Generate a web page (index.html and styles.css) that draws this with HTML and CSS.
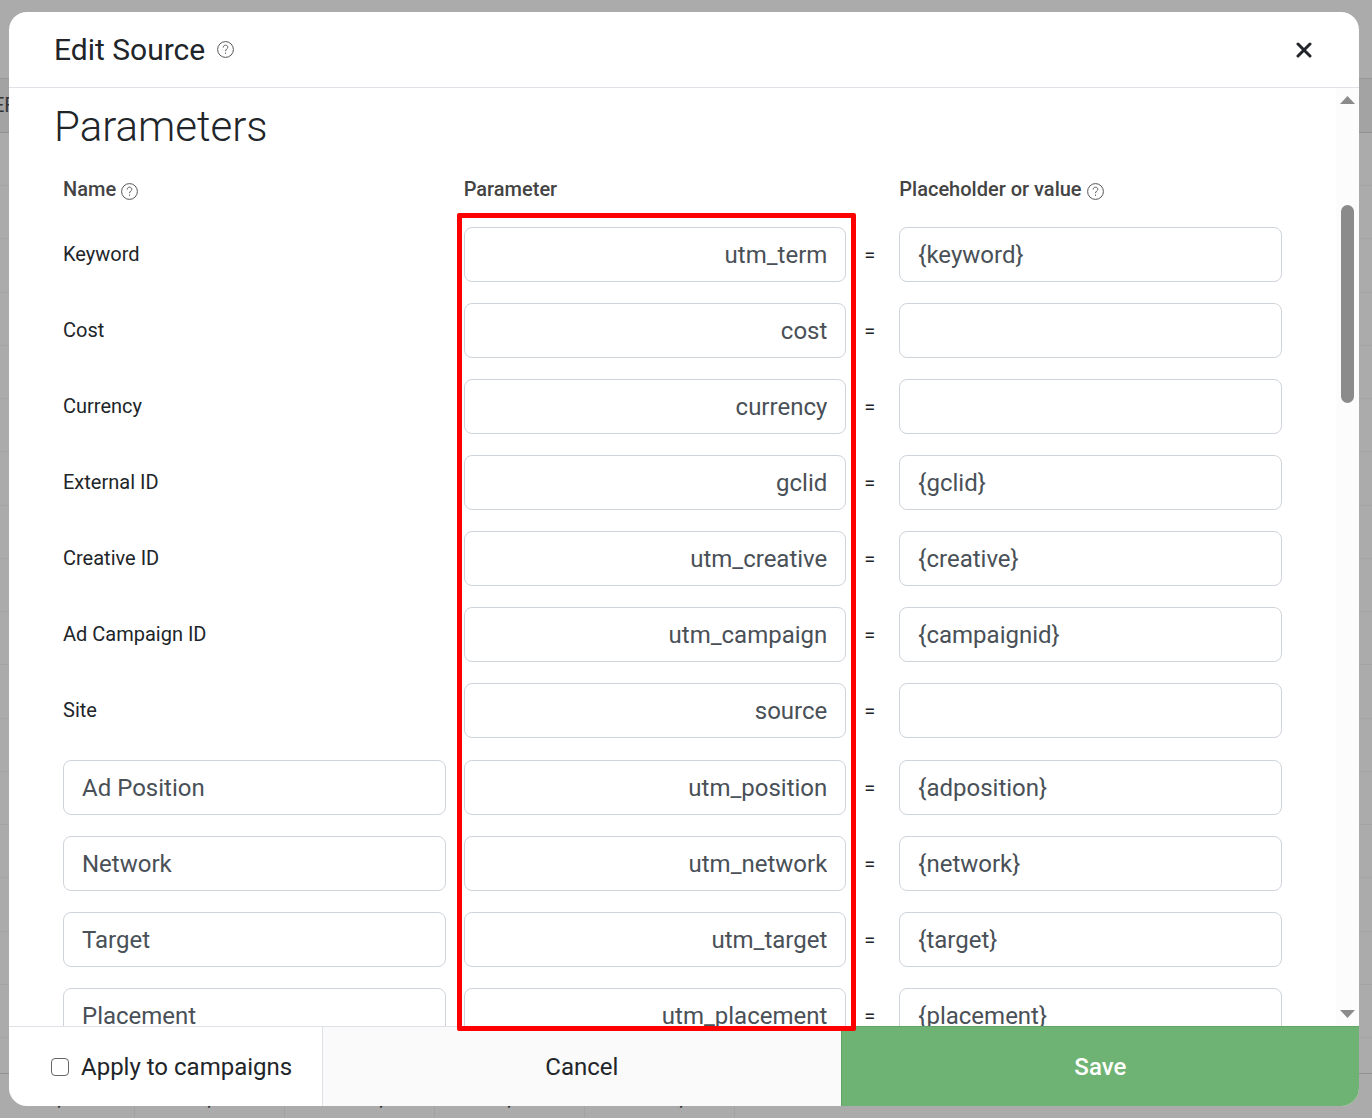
FILE: index.html
```html
<!DOCTYPE html>
<html lang="en">

<head>
    <meta charset="UTF-8">
    <meta name="viewport" content="width=device-width, initial-scale=1.0">
    <title>Edit Source</title>
    <link rel="stylesheet" href="styles.css">
</head>

<body>
    <!-- Report grid behind the dialog -->
    <div class="backdrop" aria-hidden="true">
        <div class="grid-toolbar"></div>
        <div class="grid-head">EF</div>
        <div class="grid-rows">
            <div></div><div></div><div></div><div></div><div></div><div></div>
            <div></div><div></div><div></div><div></div><div></div><div></div>
            <div></div><div></div><div></div><div></div><div></div>
        </div>
        <div class="grid-gap"></div>
        <div class="grid-total">
            <span>,</span><span>,</span><span class="wide">,</span><span>,</span><span class="wide">,</span>
        </div>
    </div>

    <div class="modal" role="dialog" aria-labelledby="modalTitle">
        <div class="modal-header">
            <h1 id="modalTitle">Edit Source</h1>
            <svg class="help" viewBox="0 0 17 17"><circle cx="8.5" cy="8.5" r="7.9" /><path d="M6.2 6.500C6.200 5.100 7.100 4.200 8.500 4.200s2.300.9 2.300 2.100c0 1.700-2.300 1.800-2.300 3.900M8.500 11.600v1.200" /></svg>
            <button type="button" class="close" aria-label="Close">
                <svg viewBox="0 0 16 16"><path d="M2 2l12 12M14 2L2 14" /></svg>
            </button>
        </div>

        <div class="modal-body">
            <div class="content">
                <h2>Parameters</h2>
                <table class="params">
                    <thead>
                        <tr>
                            <th>Name <svg class="help" viewBox="0 0 17 17"><circle cx="8.5" cy="8.5" r="7.9" /><path d="M6.2 6.500C6.200 5.100 7.100 4.200 8.500 4.200s2.300.9 2.300 2.100c0 1.700-2.300 1.800-2.300 3.900M8.500 11.600v1.200" /></svg></th>
                            <th>Parameter</th>
                            <th class="eq"></th>
                            <th>Placeholder or value <svg class="help" viewBox="0 0 17 17"><circle cx="8.5" cy="8.5" r="7.9" /><path d="M6.2 6.500C6.200 5.100 7.100 4.200 8.500 4.200s2.300.9 2.300 2.100c0 1.700-2.300 1.800-2.300 3.900M8.500 11.600v1.200" /></svg></th>
                        </tr>
                    </thead>
                    <tbody>
                        <tr>
                            <td><label for="keyword">Keyword</label></td>
                            <td><input type="text" class="param" id="keyword" value="utm_term"></td>
                            <td class="eq">=</td>
                            <td><input type="text" aria-label="Keyword value" value="{keyword}"></td>
                        </tr>
                        <tr>
                            <td><label for="cost">Cost</label></td>
                            <td><input type="text" class="param" id="cost" value="cost"></td>
                            <td class="eq">=</td>
                            <td><input type="text" aria-label="Cost value"></td>
                        </tr>
                        <tr>
                            <td><label for="currency">Currency</label></td>
                            <td><input type="text" class="param" id="currency" value="currency"></td>
                            <td class="eq">=</td>
                            <td><input type="text" aria-label="Currency value"></td>
                        </tr>
                        <tr>
                            <td><label for="externalId">External ID</label></td>
                            <td><input type="text" class="param" id="externalId" value="gclid"></td>
                            <td class="eq">=</td>
                            <td><input type="text" aria-label="External ID value" value="{gclid}"></td>
                        </tr>
                        <tr>
                            <td><label for="creativeId">Creative ID</label></td>
                            <td><input type="text" class="param" id="creativeId" value="utm_creative"></td>
                            <td class="eq">=</td>
                            <td><input type="text" aria-label="Creative ID value" value="{creative}"></td>
                        </tr>
                        <tr>
                            <td><label for="campaignId">Ad Campaign ID</label></td>
                            <td><input type="text" class="param" id="campaignId" value="utm_campaign"></td>
                            <td class="eq">=</td>
                            <td><input type="text" aria-label="Ad Campaign ID value" value="{campaignid}"></td>
                        </tr>
                        <tr>
                            <td><label for="site">Site</label></td>
                            <td><input type="text" class="param" id="site" value="source"></td>
                            <td class="eq">=</td>
                            <td><input type="text" aria-label="Site value"></td>
                        </tr>
                    </tbody>
                    <tbody class="custom">
                        <tr>
                            <td><input type="text" aria-label="Name 1" value="Ad Position"></td>
                            <td><input type="text" class="param" aria-label="Parameter 1" value="utm_position"></td>
                            <td class="eq">=</td>
                            <td><input type="text" aria-label="Value 1" value="{adposition}"></td>
                        </tr>
                        <tr>
                            <td><input type="text" aria-label="Name 2" value="Network"></td>
                            <td><input type="text" class="param" aria-label="Parameter 2" value="utm_network"></td>
                            <td class="eq">=</td>
                            <td><input type="text" aria-label="Value 2" value="{network}"></td>
                        </tr>
                        <tr>
                            <td><input type="text" aria-label="Name 3" value="Target"></td>
                            <td><input type="text" class="param" aria-label="Parameter 3" value="utm_target"></td>
                            <td class="eq">=</td>
                            <td><input type="text" aria-label="Value 3" value="{target}"></td>
                        </tr>
                        <tr>
                            <td><input type="text" aria-label="Name 4" value="Placement"></td>
                            <td><input type="text" class="param" aria-label="Parameter 4" value="utm_placement"></td>
                            <td class="eq">=</td>
                            <td><input type="text" aria-label="Value 4" value="{placement}"></td>
                        </tr>
                    </tbody>
                </table>
            </div>
            <div class="scrollbar" aria-hidden="true">
                <svg class="arrow" viewBox="0 0 15 8"><path d="M7.500 0L15 8H0z" /></svg>
                <div class="track"><div class="thumb"></div></div>
                <svg class="arrow" viewBox="0 0 15 8"><path d="M0 0h15L7.500 8z" /></svg>
            </div>
        </div>

        <div class="modal-footer">
            <label class="apply"><input type="checkbox"> Apply to campaigns</label>
            <button type="button" class="cancel">Cancel</button>
            <button type="button" class="save">Save</button>
        </div>

        <div class="highlight"></div>
    </div>
</body>

</html>
```

FILE: styles.css
```css
* {
    box-sizing: border-box;
}

body {
    margin: 0;
    height: 100vh;
    padding: 12px 13px 12px 9px;
    overflow: hidden;
    position: relative;
    background: #ababab;
    color: #212529;
    font-family: Roboto, sans-serif;
    font-size: 20px;
}

/* Grid under the overlay */
.backdrop {
    position: absolute;
    inset: 0;
    display: flex;
    flex-direction: column;
}

.grid-toolbar {
    height: 78px;
}

.grid-head {
    height: 55px;
    line-height: 52px;
    border-top: 1px solid #989898;
    border-bottom: 1px solid #919191;
    background: #a3a3a3;
    color: #333;
    text-indent: -7px;
}

.grid-rows {
    flex: 1;
    display: flex;
    flex-direction: column;
}

.grid-rows div {
    flex: 1;
    border-bottom: 1px solid #a4a4a4;
}

.grid-gap {
    height: 36px;
    border-bottom: 1px solid #919191;
}

.grid-total {
    display: flex;
    height: 44px;
    margin-left: -15px;
}

.grid-total span {
    width: 150px;
    padding-top: 12px;
    border-right: 1px solid #a2a2a2;
    text-align: center;
}

.grid-total .wide {
    padding-left: 44px;
}

/* Dialog */
.modal {
    position: relative;
    display: flex;
    flex-direction: column;
    height: 100%;
    border-radius: 18px;
    background: #fff;
}

.modal-header {
    display: flex;
    align-items: center;
    gap: 12px;
    height: 76px;
    padding: 0 45px;
    border-bottom: 1px solid #dee2e6;
}

h1 {
    margin: 0;
    font-size: 30px;
    font-weight: 400;
}

.help {
    width: 17px;
    height: 17px;
    fill: none;
    stroke: #555;
    stroke-width: 1;
    vertical-align: -4px;
}

.close {
    display: flex;
    margin-left: auto;
    padding: 2px;
    border: none;
    background: none;
    cursor: pointer;
}

.close svg {
    width: 16px;
    height: 16px;
    fill: none;
    stroke: #212529;
    stroke-width: 3;
    stroke-linecap: round;
}

.modal-body {
    display: flex;
    flex: 1;
    min-height: 0;
    overflow: hidden;
}

.content {
    flex: 1;
    padding: 14px 45px 0;
}

h2 {
    margin: 0;
    font-size: 42px;
    font-weight: 300;
    line-height: 50px;
}

.params {
    width: 100%;
    margin-top: 17px;
    table-layout: fixed;
    border-collapse: collapse;
}

.params th {
    height: 47px;
    padding: 9px 9px 0;
    color: #444;
    font-weight: 500;
    line-height: 22px;
    text-align: left;
    vertical-align: top;
}

.params td {
    height: 76px;
    padding: 11px 9px 10px;
}

.params .eq {
    width: 35px;
    padding-right: 6px;
    padding-left: 0;
    text-align: center;
}

.params label {
    display: block;
    margin-bottom: 2px;
}

.params input {
    display: block;
    width: 100%;
    height: 55px;
    padding: 0 18px;
    border: 1px solid #ced4da;
    border-radius: 8px;
    background: #fff;
    color: #495057;
    font-family: inherit;
    font-size: 24px;
}

.params .param {
    text-align: right;
}

.custom::before {
    content: "";
    display: table-row;
    height: 1px;
}

.scrollbar {
    display: flex;
    flex-direction: column;
    align-items: center;
    width: 23px;
    padding: 8px 0;
    background: #fcfcfc;
}

.arrow {
    width: 15px;
    height: 8px;
    fill: #8b8b8b;
}

.track {
    flex: 1;
    width: 13px;
    padding-top: 101px;
}

.thumb {
    height: 198px;
    border-radius: 7px;
    background: #8b8b8b;
}

.modal-footer {
    display: flex;
    height: 80px;
    border-radius: 0 0 18px 18px;
    overflow: hidden;
    font-size: 24px;
}

.apply {
    display: flex;
    align-items: center;
    gap: 12px;
    padding: 0 30px 0 42px;
    border-top: 1px solid #dee2e6;
    border-right: 1px solid #dee2e6;
}

.apply input {
    appearance: none;
    width: 18px;
    height: 18px;
    margin: 0;
    border: 1px solid #666;
    border-radius: 4px;
}

.apply input:checked {
    background: #6eb373;
}

.modal-footer button {
    flex: 1;
    border: none;
    border-top: 1px solid #dee2e6;
    font-family: inherit;
    font-size: 24px;
    cursor: pointer;
}

.modal-footer .cancel {
    background: #fafafa;
    color: #212529;
}

.modal-footer .save {
    border-top: 1px solid #5fa563;
    border-left: 1px solid #5fa563;
    background: #6eb373;
    color: #fff;
    font-weight: 500;
}

/* Marks the Parameter column */
.highlight {
    position: absolute;
    top: 201px;
    bottom: 75px;
    left: calc((100% - 148px) / 3 + 47px);
    width: calc((100% - 148px) / 3 - 1px);
    border: 5px solid #f00;
    border-radius: 2px;
    pointer-events: none;
}
```
